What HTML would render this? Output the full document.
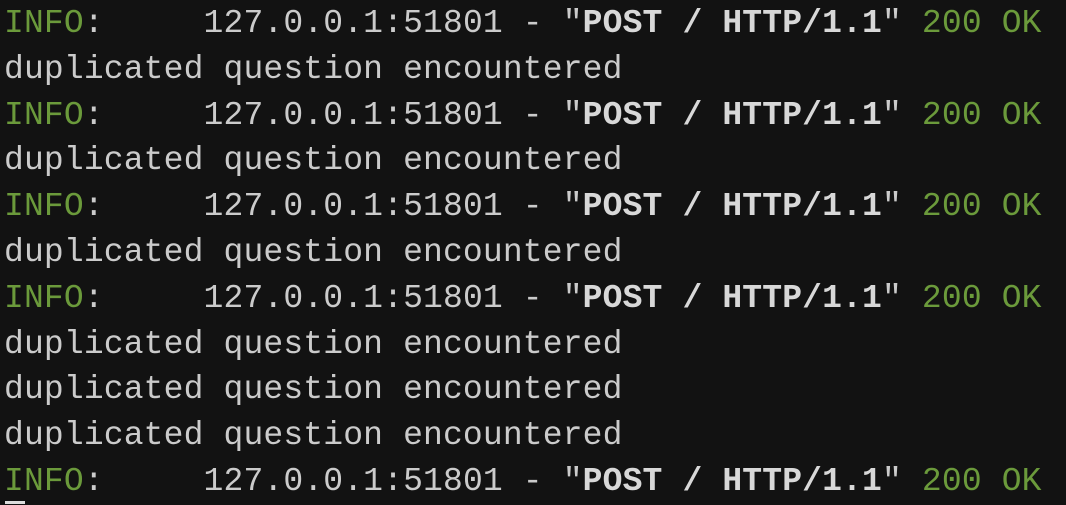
<!DOCTYPE html>
<html><head><style>
html,body{margin:0;padding:0;background:#121212;width:1066px;height:504px;overflow:hidden}
pre{margin:0;position:absolute;left:4px;top:1px;font-family:"Liberation Mono",monospace;font-size:33px;line-height:45.8px;color:#cbcbcb;letter-spacing:0.15px}
.g{color:#6b9a3b}
b{color:#d8d8d8}
.cur{position:absolute;left:5px;top:501px;width:20px;height:3px;background:#ddd}
</style></head><body>
<pre><span class="g">INFO</span>:     127.0.0.1:51801 - "<b>POST / HTTP/1.1</b>" <span class="g">200 OK</span>
duplicated question encountered
<span class="g">INFO</span>:     127.0.0.1:51801 - "<b>POST / HTTP/1.1</b>" <span class="g">200 OK</span>
duplicated question encountered
<span class="g">INFO</span>:     127.0.0.1:51801 - "<b>POST / HTTP/1.1</b>" <span class="g">200 OK</span>
duplicated question encountered
<span class="g">INFO</span>:     127.0.0.1:51801 - "<b>POST / HTTP/1.1</b>" <span class="g">200 OK</span>
duplicated question encountered
duplicated question encountered
duplicated question encountered
<span class="g">INFO</span>:     127.0.0.1:51801 - "<b>POST / HTTP/1.1</b>" <span class="g">200 OK</span></pre>
<div class="cur"></div>
</body></html>
